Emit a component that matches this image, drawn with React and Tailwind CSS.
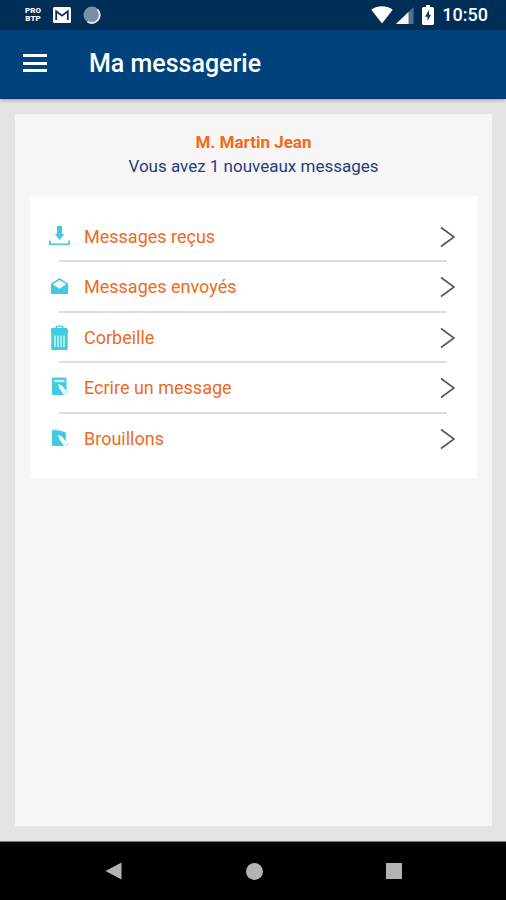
const MENU = [
  { id: "inbox", label: "Messages reçus", icon: InboxIcon },
  { id: "sent", label: "Messages envoyés", icon: SentIcon },
  { id: "trash", label: "Corbeille", icon: TrashIcon },
  { id: "compose", label: "Ecrire un message", icon: ComposeIcon },
  { id: "drafts", label: "Brouillons", icon: DraftIcon },
];

export default function App() {
  return (
    <div className="h-[900px] w-[506px] flex flex-col overflow-hidden bg-[#e4e4e4] font-['Roboto',sans-serif]">
      <StatusBar />
      <Header title="Ma messagerie" />

      <main className="flex-1 pt-[15px] pr-[14px] pb-[15px] pl-[15px]">
        <div className="h-full bg-[#f7f5f6] pt-[16px] px-[15px]">
          <div className="text-center text-[17px] leading-[24px]">
            <p className="font-bold text-[#f26a1b]">M. Martin Jean</p>
            <p className="text-[#1f3f7c]">Vous avez 1 nouveaux messages</p>
          </div>

          <nav className="mt-[18px] h-[282px] bg-white pt-[15px]">
            {MENU.map((item, idx) => (
              <MenuRow
                key={item.id}
                item={item}
                isLast={idx === MENU.length - 1}
              />
            ))}
          </nav>
        </div>
      </main>

      <NavigationBar />
    </div>
  );
}

function StatusBar() {
  return (
    <div className="h-[30px] flex-shrink-0 flex items-center bg-[#002e56] pl-[24px] pr-[18px] text-white">
      <div className="w-[18px] flex flex-col items-center text-[8px] leading-[8px] font-black">
        <span>PRO</span>
        <span>BTP</span>
      </div>

      <svg className="ml-[11px] w-[18px] h-[16px]" viewBox="0 0 18 16">
        <rect width="18" height="16" rx="1.5" fill="#fff" />
        <path d="M3.2 13V4.2L9 8.6l5.8-4.4V13" fill="none" stroke="#12305a" strokeWidth="1.8" />
      </svg>

      <svg className="ml-[12px] w-[18px] h-[18px]" viewBox="0 0 18 18">
        <circle cx="9" cy="9" r="8.5" fill="#7890a6" />
        <path d="M14.5 3.5A8 8 0 0 1 4.5 15.8" fill="none" stroke="#e6e9e8" strokeWidth="1.8" />
      </svg>

      <svg className="ml-auto w-[22px] h-[18px]" viewBox="0 0 22 18">
        <path d="M0.3 3.8C6.5-.8 15.5-.8 21.7 3.8L11 17.5z" fill="#fff" />
      </svg>
      <svg className="ml-[3px] w-[18px] h-[17px]" viewBox="0 0 18 17">
        <path d="M17.5 0V17H0z" fill="#4b7090" />
        <path d="M12.5 4.9V17H0z" fill="#fff" />
      </svg>
      <svg className="ml-[8px] w-[12px] h-[20px]" viewBox="0 0 12 20">
        <path d="M4 0h4v2h2.5Q12 2 12 3.5v15q0 1.5-1.5 1.5h-9Q0 20 0 18.500v-15Q0 2 1.500 2H4z" fill="#fff" />
        <path d="M7 5L3 11.700h2.500V16l3.500-6.300H7z" fill="#12375c" />
      </svg>
      <span className="ml-[8px] text-[18px] leading-[20px] font-medium">10:50</span>
    </div>
  );
}

function Header({ title }) {
  return (
    <header className="relative z-10 h-[69px] flex-shrink-0 flex items-center bg-[#00427e] border-b border-[#14306b] pl-[23px] shadow-[0_1px_4px_rgba(0,0,0,0.3)]">
      <button className="w-[24px] h-[18px] flex flex-col justify-between -mt-[2px]">
        <span className="w-full h-[3px] bg-white" />
        <span className="w-full h-[3px] bg-white" />
        <span className="w-full h-[3px] bg-white" />
      </button>
      <h1 className="ml-[42px] text-[25px] leading-[30px] font-medium text-white">
        {title}
      </h1>
    </header>
  );
}

function MenuRow({ item, isLast }) {
  const Icon = item.icon;

  return (
    <div className="h-[50.6px]">
      <button className="w-full h-[49px] flex items-center pt-[2px] pl-[17px] pr-[22px] text-left">
        <Icon />
        <span className="ml-[13px] text-[18px] leading-[24px] text-[#ee6a22]">
          {item.label}
        </span>
        <svg className="ml-auto w-[15px] h-[22px]" viewBox="0 0 15 22">
          <path d="M1 1.500L14 11 1 20.500" fill="none" stroke="#555" strokeWidth="1.600" />
        </svg>
      </button>
      {!isLast && <div className="h-[2px] ml-[29px] mr-[30px] bg-[#dedede]" />}
    </div>
  );
}

function InboxIcon() {
  return (
    <svg className="w-[24px] h-[26px]" viewBox="0 0 24 26" fill="#40cbe0">
      <path d="M10 2h5v8h2.200l-4.700 6L7.800 10H10z" />
      <path d="M2 16.500h1.700v3h17.600v-3H23V21H2z" />
    </svg>
  );
}

function SentIcon() {
  return (
    <svg className="w-[24px] h-[26px]" viewBox="0 0 24 26">
      <path d="M4 9.500L12.500 4 21 9.500V20H4z" fill="#40cbe0" />
      <path d="M5.800 10.300L12.500 6l6.700 4.300-6.700 4.500z" fill="#fff" />
    </svg>
  );
}

function TrashIcon() {
  return (
    <svg className="w-[24px] h-[26px]" viewBox="0 0 24 26">
      <path d="M8.500 3V1.800Q8.500.500 12.500.500t4 1.300V3h3.800v3.500H4.300V3z" fill="#40cbe0" />
      <path d="M4.300 7.500h16.400V24q0 1-1 1H5.300q-1 0-1-1z" fill="#40cbe0" />
      <path d="M4 4.500h17v3.500H4z" fill="#40cbe0" />
      <path d="M10 2.300h5" stroke="#fff" strokeWidth="1" />
      <path d="M8 10.500V22M11 10.500V22M14 10.500V22M17 10.500V22" stroke="#d9f6fa" strokeWidth="1.400" />
    </svg>
  );
}

function PenMark() {
  return (
    <>
      <path d="M11 9l3.500 1.200 6.200 7.300q.8 1.500-.6 2.700t-2.800.2l-5-7.500z" fill="#fff" />
      <path d="M16.500 16l2.500 3.500 1.600-.6.400-1.700-3-3.700" fill="none" stroke="#9be2ed" strokeWidth=".8" />
    </>
  );
}

function ComposeIcon() {
  return (
    <svg className="w-[24px] h-[26px]" viewBox="0 0 24 26">
      <path d="M5 3.500q0-1 1-1h12.500q1 0 1 1V20H6q-1 0-1-1z" fill="#40cbe0" />
      <path d="M7.200 4.800h10.300v2.400H7.200z" fill="#bff0f6" />
      <PenMark />
    </svg>
  );
}

function DraftIcon() {
  return (
    <svg className="w-[24px] h-[26px]" viewBox="0 0 24 26">
      <path d="M5 3.500l2 1 1.500-1 2.500 1.300 2-.3 5.800 2V20H6q-1 0-1-1z" fill="#40cbe0" />
      <PenMark />
    </svg>
  );
}

function NavigationBar() {
  return (
    <div className="h-[59px] flex-shrink-0 flex items-center justify-between bg-black border-t border-[#777] pl-[105px] pr-[104px]">
      <svg className="w-[17px] h-[18px]" viewBox="0 0 17 18">
        <path d="M0.500 9L16.500.500v17z" fill="#b3b3b3" />
      </svg>
      <div className="w-[17px] h-[17px] rounded-full bg-[#b3b3b3]" />
      <div className="w-[16px] h-[16px] bg-[#b3b3b3]" />
    </div>
  );
}
